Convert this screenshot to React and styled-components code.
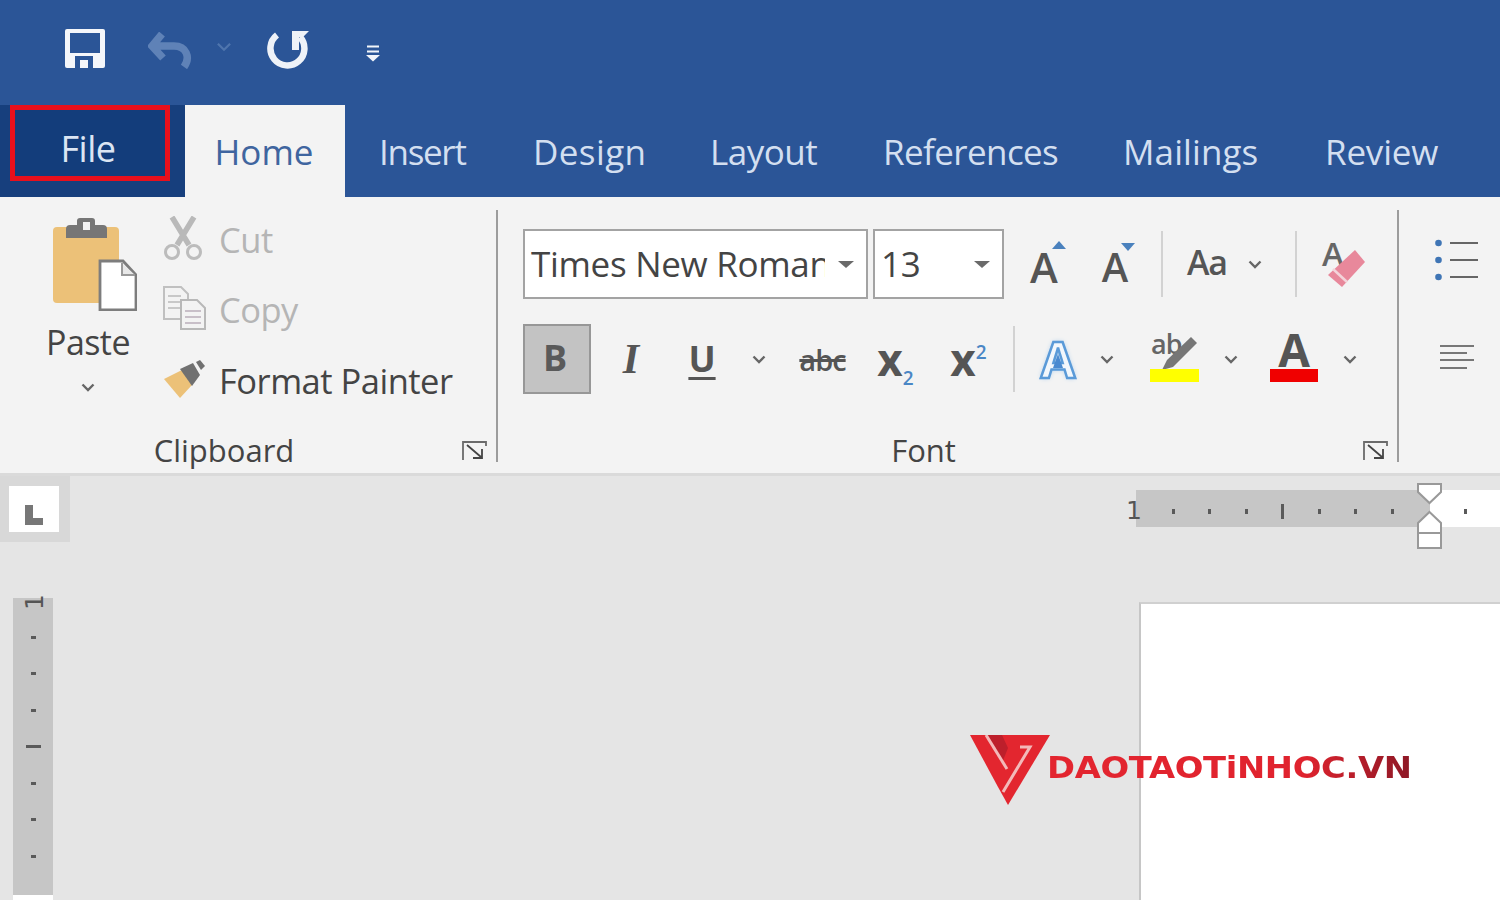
import React from "react";
import styled, { createGlobalStyle } from "styled-components";

const Global = createGlobalStyle`
  html, body { margin: 0; padding: 0; background: #e5e5e5; }
  * { box-sizing: border-box; }
`;
const Page = styled.div`
  width: 1500px; height: 900px; overflow: hidden; position: relative;
  display: flex; flex-direction: column;
  font-family: "Open Sans", "Noto Sans", "Liberation Sans", sans-serif;
`;
const TitleBar = styled.div`
  height: 105px; background: #2b5597; display: flex; align-items: flex-start; flex: none;
`;
const QatIcon = styled.svg`
  display: block; flex: none; margin-left: ${p => p.$ml}px; margin-top: ${p => p.$mt}px;
`;
const TabBar = styled.div`
  height: 92px; background: #2b5597; display: flex; flex: none;
`;
const FileTab = styled.div`
  width: 185px; background: #173f7d; padding: 0 0 0 10px; flex: none;
`;
const FileFrame = styled.div`
  width: 160px; height: 76px; border: 5px solid #e8101c; background: #133d7b;
  color: #dbe5f3; font-size: 36px; letter-spacing: -0.5px; padding-top: 10px; padding-right: 4px;
  display: flex; align-items: center; justify-content: center;
`;
const HomeTab = styled.div`
  width: 160px; flex: none; display: flex; align-items: center; justify-content: center; padding: 0 2px 0 0;
  font-size: 35px; letter-spacing: 0; background: #f3f3f3; color: #3f659f;
`;
const Tab = styled.div`
  width: ${p => p.$w}px; padding-left: ${p => p.$pl}px; flex: none;
  display: flex; align-items: center;
  font-size: 35px; letter-spacing: ${p => p.$ls}px; color: #d3dff0; white-space: nowrap;
`;
const Ribbon = styled.div`
  height: 279px; flex: none; background: #f3f3f3; border-bottom: 3px solid #dadada;
  display: flex; padding-top: 13px;
`;
const Group = styled.div`
  width: ${p => p.$w}px; height: 252px; flex: none;
  border-right: ${p => (p.$sep ? "2px solid #9c9c9c" : "none")};
  display: flex; flex-direction: column;
`;
const GroupBody = styled.div`
  height: 229px; flex: none; display: flex;
`;
const GroupFooter = styled.div`
  height: 23px; flex: none; display: grid; grid-template-columns: 1fr 48px; grid-template-rows: 23px; align-items: center;
`;
const GroupLabel = styled.div`
  text-align: center; color: #444; font-size: 31px; line-height: 23px;
`;
const Launcher = styled.svg`
  display: block; margin-left: 14px;
`;
const PasteCol = styled.div`
  width: 163px; flex: none; display: flex; flex-direction: column; align-items: center;
  padding: 8px 0 0 13px;
`;
const PasteIcon = styled.svg`
  display: block; margin-left: 14px;
`;
const PasteLabel = styled.div`
  font-size: 34px; letter-spacing: -0.6px; color: #444; line-height: 40px; margin-top: 11px;
`;
const PasteChevron = styled.div`
  height: 18px; margin-top: 13px;
`;
const SmallCol = styled.div`
  display: flex; flex-direction: column; margin-top: -6px;
`;
const SmallRow = styled.div`
  height: 70.5px; display: flex; align-items: center; gap: 13px;
  font-size: 34.5px; letter-spacing: -0.5px;
  color: ${p => (p.$disabled ? "#b5b5b5" : "#444")};
`;
const IconBox = styled.div`
  width: 43px; display: flex; justify-content: flex-start; margin-top: -3px;
`;
const FontBody = styled.div`
  padding: 19px 0 0 25px; display: flex; flex-direction: column; gap: 25px;
`;
const Row = styled.div`
  height: 70px; display: flex; align-items: center;
`;
const Select = styled.div`
  width: ${p => p.$w}px; height: 70px; margin-right: ${p => p.$mr || 0}px; flex: none;
  background: #fff; border: 2px solid #a3a3a3; position: relative;
  display: flex; align-items: center; padding: 0 0 2px 6px; overflow: hidden;
  font-size: 35px; letter-spacing: -0.3px; color: #444; white-space: nowrap;
`;
const SelectCaret = styled.i`
  position: absolute; right: ${p => p.$r}px; top: 30px; width: 0; height: 0;
  border-left: 8px solid transparent; border-right: 8px solid transparent;
  border-top: 7px solid #6a6a6a;
`;
const SelectMask = styled.i`
  position: absolute; right: 0; top: 0; bottom: 0; width: 41px; background: #fff;
`;
const Slot = styled.div`
  width: ${p => p.$w}px; margin-left: ${p => p.$ml || 0}px; flex: none;
  display: flex; align-items: center; justify-content: center; position: relative;
  color: #555; height: 70px;
`;
const VSep = styled.div`
  width: 2px; height: ${p => p.$h || 66}px; flex: none; margin-left: ${p => p.$ml}px; background: #d2d2d2;
`;
const BoldBtn = styled.div`
  width: 68px; height: 70px; flex: none; background: #c3c3c3; border: 2px solid #979797;
  display: flex; align-items: center; justify-content: center; padding: 0 4px 4px 0;
  font-family: "Open Sans", sans-serif; font-weight: 700; font-size: 36px; color: #5a5a5a;
`;
const Glyph = styled.span`
  font-family: ${p => p.$serif ? '"Liberation Serif", serif' : '"Open Sans", sans-serif'};
  font-size: ${p => p.$size || 36}px;
  font-weight: ${p => p.$weight || 700};
  font-style: ${p => (p.$italic ? "italic" : "normal")};
  color: ${p => p.$color || "#555"};
  letter-spacing: ${p => p.$ls || 0}px;
  line-height: 1;
  margin: ${p => p.$m || "0"};
  text-decoration: ${p => p.$deco || "none"};
  text-decoration-thickness: ${p => p.$deco ? "3px" : "auto"};
  text-underline-offset: 5px;
`;
const Script = styled.sup`
  font-size: 19px; font-weight: 600; color: #4a86c5; line-height: 0;
  vertical-align: ${p => (p.$sub ? "-9px" : "17px")};
  margin-left: 1px;
`;
const OutlineA = styled.span`
  font-family: "Open Sans", sans-serif; font-weight: 700; font-size: 50px; line-height: 1;
  color: #f2f7fc; -webkit-text-stroke: 2.5px #5a9ad8; text-shadow: 0 0 5px #a2c8ec;
`;
const OutlineCore = styled.svg`
  position: absolute; left: 13px; top: 30px;
`;
const Caret = styled.svg`
  position: absolute; left: ${p => p.$x}px; top: ${p => p.$y}px;
`;
const ListColumn = styled.div`
  display: flex; flex-direction: column;
`;
const ListIcon = styled.svg`
  display: block; margin: ${p => p.$m};
`;
const DocArea = styled.div`
  flex: 1; min-height: 0; background: #e5e5e5; display: flex;
`;
const LeftCol = styled.div`
  width: 1140px; flex: none; display: flex; flex-direction: column;
`;
const Corner = styled.div`
  width: 70px; height: 66px; background: #d8d8d8; padding: 10px 11px 10px 9px; flex: none;
`;
const CornerInner = styled.div`
  width: 50px; height: 46px; background: #fff; display: flex; align-items: flex-end; padding: 0 0 7px 16px;
`;
const VRuler = styled.div`
  margin: 56px 0 0 13px; width: 40px; height: 297px; background: #c6c6c6; position: relative;
  display: flex; flex-direction: column; align-items: center; padding-top: 21px; flex: none;
`;
const VNum = styled.div`
  position: absolute; top: -6px; left: 12px; font-family: "DejaVu Sans", sans-serif; font-size: 25px; line-height: 20px; color: #555;
  transform: rotate(-90deg); width: 20px; text-align: center;
`;
const VCell = styled.div`
  height: 36.5px; display: flex; align-items: center; justify-content: center; flex: none;
`;
const VTick = styled.i`
  display: block; height: 3px; background: #5a5a5a; width: ${p => (p.$long ? 15 : 5)}px;
`;
const VRulerEnd = styled.div`
  margin-left: 13px; width: 40px; height: 10px; background: #fff; flex: none;
`;
const RightCol = styled.div`
  flex: 1; display: flex; flex-direction: column; min-width: 0;
`;
const HRuler = styled.div`
  margin: 14px 0 0 -4px; height: 37px; flex: none; position: relative;
  background: linear-gradient(90deg, #c6c6c6 294px, #fff 294px);
  display: flex; align-items: center; padding: 5px 0 0 19px;
`;
const HNum = styled.div`
  position: absolute; left: -10px; top: 0; height: 37px; line-height: 42px; font-family: "DejaVu Sans", sans-serif; font-size: 25px; color: #555;
`;
const HCell = styled.div`
  width: 36.5px; flex: none; display: flex; justify-content: center;
`;
const HTick = styled.i`
  display: block; width: 3px; height: ${p => (p.$long ? 15 : 5)}px; background: ${p => (p.$off ? "transparent" : "#5a5a5a")};
`;
const Marker = styled.svg`
  position: absolute; left: 280px; top: -8px; overflow: visible;
`;
const PageSheet = styled.div`
  margin-top: 75px; flex: 1; background: #fff; border-top: 2px solid #d0d0d0; border-left: 2px solid #c6c6c6;
  margin-left: -1px;
`;
const Logo = styled.div`
  position: absolute; left: 970px; top: 735px; display: flex; align-items: flex-start;
`;
const LogoText = styled.div`
  margin: 15px 0 0 -3px; font-family: "DejaVu Sans", sans-serif; font-weight: 700; font-size: 30px;
  line-height: 36px; letter-spacing: -0.3px; white-space: nowrap;
  transform: scaleX(1.125); transform-origin: left center;
  background: linear-gradient(90deg, #e3252f 0%, #e0232e 70%, #8d1826 100%);
  -webkit-background-clip: text; background-clip: text; color: transparent;
`;
const Chevron = ({ c = "#666", w = 14 }) => (
  <svg width={w} height="9" viewBox="0 0 14 9"><path d="M1.5 1.5 7 7l5.5-5.5" fill="none" stroke={c} strokeWidth="2.4" /></svg>
);
const LauncherIcon = () => (
  <Launcher width="25" height="20" viewBox="0 0 25 20">
    <path d="M1 19V1h23v4" fill="none" stroke="#6b6b6b" strokeWidth="1.8" />
    <path d="M5 4l14 12M20 8v9h-9" fill="none" stroke="#444" strokeWidth="1.8" />
  </Launcher>
);
const tabs = [
  { t: "Insert", w: 155, pl: 34, ls: -1.3 },
  { t: "Design", w: 178, pl: 33, ls: 0.4 },
  { t: "Layout", w: 173, pl: 32, ls: -0.5 },
  { t: "References", w: 240, pl: 32, ls: -0.6 },
  { t: "Mailings", w: 202, pl: 32, ls: 0.1 },
  { t: "Review", w: 200, pl: 32, ls: -0.2 },
];
const hTicks = [0, 0, 0, 1, 0, 0, 0, 2, 0];
const vTicks = [0, 0, 0, 1, 0, 0, 0];

export default function App() {
  return (
    <Page>
      <Global />
      <TitleBar>
        <QatIcon $ml={65} $mt={29} width="40" height="39" viewBox="0 0 40 39">
          <rect width="40" height="39" rx="2" fill="#f4f6fa" />
          <rect x="5" y="4" width="30" height="20" fill="#2b5597" />
          <rect x="10" y="27" width="18" height="12" fill="#2b5597" />
          <rect x="15" y="31" width="8" height="8" fill="#f4f6fa" />
        </QatIcon>
        <QatIcon $ml={43} $mt={32} width="44" height="37" viewBox="0 0 44 37">
          <path d="M14 2 4 14 15 26M6 14h20c12 0 17 11 10 21" fill="none" stroke="#5f82b7" strokeWidth="7.5" />
        </QatIcon>
        <QatIcon $ml={24} $mt={42} width="16" height="10" viewBox="0 0 14 9">
          <path d="M1.5 1.5 7 7l5.5-5.5" fill="none" stroke="#4f75ad" strokeWidth="2" />
        </QatIcon>
        <QatIcon $ml={35} $mt={28} width="42" height="41" viewBox="0 0 42 41">
          <path d="M10 7A17 17 0 1 0 33 9" fill="none" stroke="#eef2f8" strokeWidth="6.5" />
          <path d="M25 22V3h17l-6 6h-4v13z" fill="#eef2f8" />
        </QatIcon>
        <QatIcon $ml={57} $mt={45} width="14" height="17" viewBox="0 0 14 17">
          <path d="M1 1.5h12M1 6.5h12" stroke="#f2f5fa" strokeWidth="2.2" />
          <path d="M0 10h14l-7 6.5z" fill="#f2f5fa" />
        </QatIcon>
      </TitleBar>
      <TabBar>
        <FileTab><FileFrame>File</FileFrame></FileTab>
        <HomeTab>Home</HomeTab>
        {tabs.map(t => <Tab key={t.t} $w={t.w} $pl={t.pl} $ls={t.ls}>{t.t}</Tab>)}
      </TabBar>
      <Ribbon>
        <Group $w={498} $sep>
          <GroupBody>
            <PasteCol>
              <PasteIcon width="84" height="93" viewBox="0 0 84 93">
                <rect x="0" y="9" width="66" height="76" rx="4" fill="#ecc178" />
                <path d="M13 20v-9a4 4 0 0 1 4-4h7V3a3 3 0 0 1 3-3h12a3 3 0 0 1 3 3v4h8a4 4 0 0 1 4 4v9z" fill="#767676" />
                <rect x="30" y="4" width="7" height="8" fill="#f3f3f3" />
                <path d="M47 43h23l13 14v35H47z" fill="#fff" stroke="#7d7d7d" strokeWidth="2.8" />
                <path d="M69 45v12h13" fill="#e8e8e8" stroke="#9a9a9a" strokeWidth="2" />
              </PasteIcon>
              <PasteLabel>Paste</PasteLabel>
              <PasteChevron><Chevron c="#666" /></PasteChevron>
            </PasteCol>
            <SmallCol>
              <SmallRow $disabled>
                <IconBox>
                  <svg width="40" height="44" viewBox="0 0 40 44">
                    <path d="M9 1 26 29M31 1 14 29" stroke="#b9b9b9" strokeWidth="5.5" fill="none" />
                    <circle cx="9" cy="36" r="6.5" fill="none" stroke="#bcbcbc" strokeWidth="3" />
                    <circle cx="31" cy="36" r="6.5" fill="none" stroke="#bcbcbc" strokeWidth="3" />
                  </svg>
                </IconBox>
                Cut
              </SmallRow>
              <SmallRow $disabled>
                <IconBox>
                  <svg width="43" height="44" viewBox="0 0 43 44">
                    <path d="M1 1h17l7 7v25H1z" fill="#f3f3f3" stroke="#c0c0c0" strokeWidth="2" />
                    <path d="M5 10h13M5 16h13M5 22h13" stroke="#c8c8c8" strokeWidth="2" />
                    <path d="M18 14h16l8 8v21H18z" fill="#f3f3f3" stroke="#b8b8b8" strokeWidth="2" />
                    <path d="M22 25h16M22 31h16M22 37h16" stroke="#c8bfc8" strokeWidth="2" />
                  </svg>
                </IconBox>
                Copy
              </SmallRow>
              <SmallRow>
                <IconBox>
                  <svg width="43" height="38" viewBox="0 0 43 38">
                    <path d="M1 19 19 10l10 15-12 13z" fill="#ecc178" />
                    <path d="M17 9 30 3l7 12-8 11z" fill="#707070" />
                    <path d="M33 2 37 0l5 6-4 4z" fill="#707070" />
                  </svg>
                </IconBox>
                Format Painter
              </SmallRow>
            </SmallCol>
          </GroupBody>
          <GroupFooter>
            <GroupLabel>Clipboard</GroupLabel>
            <LauncherIcon />
          </GroupFooter>
        </Group>
        <Group $w={901} $sep>
          <GroupBody>
            <FontBody>
              <Row>
                <Select $w={345} $mr={5}>
                  Times New Roman
                  <SelectMask />
                  <SelectCaret $r={12} />
                </Select>
                <Select $w={131}>
                  13
                  <SelectCaret $r={12} />
                </Select>
                <Slot $w={70} $ml={8}>
                  <Glyph $size={42} $weight={600} $m="5px 6px 0 0">A</Glyph>
                  <Caret $x={40} $y={12} width="14" height="8" viewBox="0 0 14 8"><path d="M0 8 7 0l7 8z" fill="#4a81bd" /></Caret>
                </Slot>
                <Slot $w={70}>
                  <Glyph $size={40} $weight={600} $m="6px 4px 0 0">A</Glyph>
                  <Caret $x={39} $y={14} width="14" height="8" viewBox="0 0 14 8"><path d="M0 0h14L7 8z" fill="#4a81bd" /></Caret>
                </Slot>
                <VSep $ml={9} />
                <Slot $w={42} $ml={23}><Glyph $size={34} $weight={600} $ls={-1} $m="0 0 5px">Aa</Glyph></Slot>
                <Slot $w={14} $ml={20}><Chevron /></Slot>
                <VSep $ml={33} />
                <Slot $w={44} $ml={25}>
                  <svg width="44" height="50" viewBox="0 0 44 50" overflow="visible">
                    <text x="0" y="27" fontFamily="Open Sans, sans-serif" fontWeight="600" fontSize="33" fill="#666">A</text>
                    <path d="M33 11 43 23 20 48 6 36z" fill="#e8889b" />
                    <path d="M11 30 25 43" stroke="#f3d4da" strokeWidth="2.5" />
                  </svg>
                </Slot>
              </Row>
              <Row>
                <BoldBtn>B</BoldBtn>
                <Slot $w={80}><Glyph $serif $italic $size={42}>I</Glyph></Slot>
                <Slot $w={62}><Glyph $size={36} $deco="underline">U</Glyph></Slot>
                <Slot $w={14} $ml={19}><Chevron /></Slot>
                <Slot $w={49} $ml={32}><Glyph $size={29} $weight={600} $ls={-1} $deco="line-through">abc</Glyph></Slot>
                <Slot $w={36} $ml={30}><Glyph $size={44} $weight={700} $ls={-1}>x<Script $sub>2</Script></Glyph></Slot>
                <Slot $w={36} $ml={37}><Glyph $size={44} $weight={700} $ls={-1}>x<Script>2</Script></Glyph></Slot>
                <VSep $ml={27} />
                <Slot $w={36} $ml={25}>
                  <OutlineA>A</OutlineA>
                  <OutlineCore width="10" height="14" viewBox="0 0 10 14"><path d="M5 0 10 14H0z" fill="#4a8ad0" /></OutlineCore>
                </Slot>
                <Slot $w={14} $ml={24}><Chevron /></Slot>
                <Slot $w={49} $ml={36}>
                  <svg width="49" height="50" viewBox="0 0 49 50" overflow="visible">
                    <text x="1" y="20" fontFamily="Open Sans, sans-serif" fontWeight="600" fontSize="27" letterSpacing="-1" fill="#666">ab</text>
                    <path d="M41 3 47 9 23 33 12 36 17 26z" fill="#767676" />
                    <rect y="35" width="49" height="13" fill="#ffff00" />
                  </svg>
                </Slot>
                <Slot $w={14} $ml={25}><Chevron /></Slot>
                <Slot $w={48} $ml={32}>
                  <svg width="48" height="50" viewBox="0 0 48 50" overflow="visible">
                    <text x="24" y="33" textAnchor="middle" fontFamily="Open Sans, sans-serif" fontWeight="700" fontSize="46" fill="#555">A</text>
                    <rect y="35" width="48" height="13" fill="#f00000" />
                  </svg>
                </Slot>
                <Slot $w={14} $ml={25}><Chevron /></Slot>
              </Row>
            </FontBody>
          </GroupBody>
          <GroupFooter>
            <GroupLabel>Font</GroupLabel>
            <LauncherIcon />
          </GroupFooter>
        </Group>
        <Group $w={100}>
          <GroupBody>
            <ListColumn>
              <ListIcon $m="29px 0 0 36px" width="46" height="42" viewBox="0 0 46 42">
                <g fill="#3f75b5"><circle cx="3.5" cy="4" r="3.3" /><circle cx="3.5" cy="21" r="3.3" /><circle cx="3.5" cy="38" r="3.3" /></g>
                <path d="M15 4h28M15 21h28M15 38h28" stroke="#666" strokeWidth="2" />
              </ListIcon>
              <ListIcon $m="63px 0 0 40px" width="36" height="26" viewBox="0 0 36 26">
                <path d="M1 2h34M1 9h27M1 16h34M1 24h27" stroke="#777" strokeWidth="2" />
              </ListIcon>
            </ListColumn>
          </GroupBody>
        </Group>
      </Ribbon>
      <DocArea>
        <LeftCol>
          <Corner>
            <CornerInner>
              <svg width="18" height="20" viewBox="0 0 18 20"><path d="M0 0h8v13h10v7H0z" fill="#777" /></svg>
            </CornerInner>
          </Corner>
          <VRuler>
            <VNum>1</VNum>
            {vTicks.map((l, i) => <VCell key={i}><VTick $long={l} /></VCell>)}
          </VRuler>
          <VRulerEnd />
        </LeftCol>
        <RightCol>
          <HRuler>
            <HNum>1</HNum>
            {hTicks.map((l, i) => <HCell key={i}><HTick $long={l === 1} $off={l === 2} /></HCell>)}
            <Marker width="27" height="68" viewBox="0 0 27 68">
              <path d="M2 2h23v8L13.5 21 2 10z" fill="#fff" stroke="#999" strokeWidth="2" />
              <path d="M13.5 30 25 41v25H2V41z" fill="#fff" stroke="#999" strokeWidth="2" />
              <path d="M2 51h23" stroke="#999" strokeWidth="2" />
            </Marker>
          </HRuler>
          <PageSheet />
        </RightCol>
      </DocArea>
      <Logo>
        <svg width="80" height="71" viewBox="0 0 80 71">
          <path d="M0 0H80L38 70 28 52z" fill="#e3262f" />
          <path d="M18 0H32L38 13 32 28z" fill="#bd1f2b" />
          <path d="M16 0 37 34" stroke="#f3b9b9" strokeWidth="3" />
          <path d="M50 12H60L33 57" stroke="#f3b9b9" strokeWidth="3" fill="none" />
        </svg>
        <LogoText>DAOTAOTiNHOC.VN</LogoText>
      </Logo>
    </Page>
  );
}
